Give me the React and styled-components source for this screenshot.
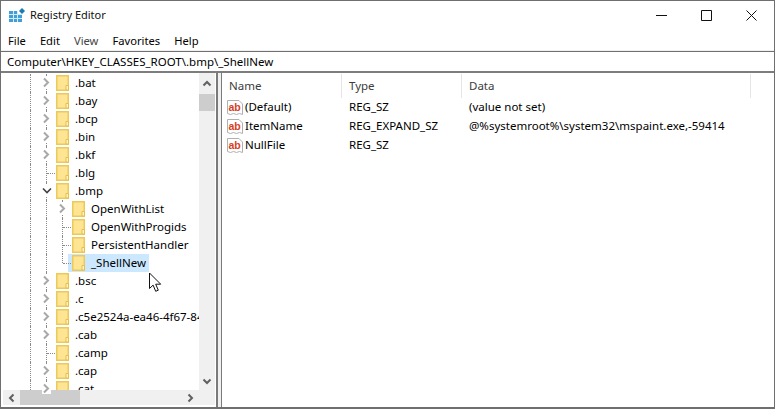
import styled, { createGlobalStyle } from "styled-components";

const Global = createGlobalStyle`
  html, body {
    margin: 0;
    padding: 0;
    background: #fff;
  }
  * {
    box-sizing: border-box;
  }
`;

const Window = styled.div`
  position: relative;
  width: 775px;
  height: 409px;
  display: flex;
  flex-direction: column;
  overflow: hidden;
  background: #fff;
  border: 1px solid #6f6f6f;
  border-bottom: 0;
  color: #000;
  font-family: "Noto Sans", "Open Sans", sans-serif;
  font-size: 11.5px;
`;

const TitleBar = styled.div`
  height: 29px;
  flex: none;
  display: flex;
  align-items: center;
  padding-left: 8px;
`;

const AppName = styled.span`
  margin: 0 0 2px 5px;
  font-size: 11px;
  color: #111;
`;

const Controls = styled.div`
  margin-left: auto;
  display: flex;
`;

const ControlButton = styled.div`
  width: 45px;
  height: 29px;
  display: flex;
  align-items: center;
  justify-content: center;
`;

const MenuBar = styled.div`
  height: 21px;
  flex: none;
  display: flex;
  align-items: center;
  padding-left: 7px;
  gap: 14px;
  border-bottom: 1px solid #f0f0f0;
`;

const MenuItem = styled.span`
  font-size: 11.2px;
  color: ${(p) => (p.$faded ? "#444" : "#000")};
`;

const AddressBar = styled.div`
  height: 22px;
  flex: none;
  display: flex;
  align-items: center;
  padding-left: 6px;
  border-top: 1px solid #6f6f6f;
  border-bottom: 2px solid #7d7d7d;
`;

const Panes = styled.div`
  flex: 1;
  min-height: 0;
  display: flex;
  border-bottom: 2px solid #6f6f6f;
`;

const TreePane = styled.div`
  position: relative;
  width: 215px;
  flex: none;
  overflow: hidden;
`;

const TreeRows = styled.div`
  padding-top: 1px;
`;

const Row = styled.div`
  position: relative;
  height: 18px;
  display: flex;
  align-items: center;
  padding-left: ${(p) => (p.$depth ? 67 : 51)}px;
  white-space: nowrap;

  &::before {
    content: "";
    position: absolute;
    left: 29px;
    top: 0;
    bottom: 0;
    border-left: 1px dotted #8a8a8a;
  }

  &::after {
    content: "";
    position: absolute;
    left: 45px;
    top: 0;
    bottom: 0;
    border-left: 1px dotted #8a8a8a;
  }
`;

const BranchLine = styled.span`
  position: absolute;
  left: 61px;
  top: 0;
  height: ${(p) => (p.$last ? 9 : 18)}px;
  border-left: 1px dotted #8a8a8a;
`;

const Tick = styled.span`
  position: absolute;
  left: ${(p) => (p.$depth ? 62 : 46)}px;
  top: 9px;
  width: 8px;
  border-top: 1px dotted #8a8a8a;
`;

const Arrow = styled.svg`
  position: absolute;
  z-index: 1;
  left: ${(p) => (p.$depth ? 57 : 41)}px;
  top: 3px;
  background: #fff;
`;

const NodeLabel = styled.span`
  display: inline-flex;
  align-items: center;
  height: 18px;
  padding: 0 ${(p) => (p.$selected ? 3 : 0)}px 0 4px;
  gap: 6px;
  background: ${(p) => (p.$selected ? "#cce8ff" : "transparent")};
`;

const NodeText = styled.span`
  margin-bottom: 2px;
`;

const VScroll = styled.div`
  position: absolute;
  top: 0;
  right: 1px;
  bottom: 2px;
  width: 16px;
  background: #f0f0f0;
  display: flex;
  flex-direction: column;
`;

const ScrollStep = styled.div`
  height: ${(p) => (p.$end ? 17 : 21)}px;
  flex: none;
  display: flex;
  align-items: center;
  justify-content: center;
  margin-top: ${(p) => (p.$end ? "auto" : 0)};
  margin-bottom: ${(p) => (p.$end ? 15 : 0)}px;
`;

const VThumb = styled.div`
  height: 17px;
  background: #cdcdcd;
`;

const HScroll = styled.div`
  position: absolute;
  left: 2px;
  right: 17px;
  bottom: 2px;
  height: 15px;
  background: #f0f0f0;
  display: flex;
  align-items: center;
`;

const HStep = styled.div`
  width: 17px;
  height: 15px;
  flex: none;
  display: flex;
  align-items: center;
  justify-content: center;
  margin-left: ${(p) => (p.$end ? "auto" : 0)};
`;

const HThumb = styled.div`
  width: 60px;
  height: 15px;
  background: #cdcdcd;
`;

const Splitter = styled.div`
  width: 6px;
  flex: none;
  background: #f0f0f0;
  border-left: 2px solid #7a7a7a;
  border-right: 1px solid #7a7a7a;
`;

const ListPane = styled.div`
  flex: 1;
  min-width: 0;
  padding-top: 1px;
`;

const ListHeader = styled.div`
  height: 24px;
  display: grid;
  grid-template-columns: 120px 120px 289px;
  color: #3c3c3c;
`;

const HeaderCell = styled.div`
  display: flex;
  align-items: center;
  padding: 0 0 2px 7px;
  border-right: 1px solid #e5e5e5;
`;

const ListRow = styled.div`
  height: 19px;
  display: grid;
  grid-template-columns: 120px 120px 1fr;
  align-items: center;
`;

const NameCell = styled.div`
  display: flex;
  align-items: center;
  gap: 2px;
  padding-left: 5px;
`;

const NameText = styled.span`
  margin-bottom: 2px;
`;

const TextCell = styled.div`
  padding: 0 0 2px 7px;
  white-space: nowrap;
`;

const Pointer = styled.svg`
  position: absolute;
  z-index: 2;
  left: 147px;
  top: 271px;
`;

const AppIcon = () => (
  <svg width="16" height="16" viewBox="0 0 16 16">
    <path d="M0 3h9v3h4v8H0z" fill="#3f9fd6" />
    <path d="M4.5 3v11M8.5 3v11M0 6.5h13M0 10.5h13" stroke="#d3ecf8" strokeWidth="1" />
    <path d="M10 3l3-3 3 3-3 3z" fill="#1b7bb4" />
  </svg>
);

const FolderIcon = () => (
  <svg width="13" height="16" viewBox="0 0 13 16">
    <path d="M.75.75h11.5v14.5H.75z" fill="#fee594" stroke="#eec95a" strokeWidth="1.5" />
    <path d="M10 10.5h2.5V15H10z" fill="#fff3c4" stroke="#e8bf46" />
  </svg>
);

const ValueIcon = () => (
  <svg width="16" height="16" viewBox="0 0 16 16">
    <path
      d="M.5.5h11.5l3.5 3.5v10.5l-3-1-3 1-3-1-3 1-3-1z"
      fill="#fff"
      stroke="#b0b0b0"
    />
    <text
      x="1.5"
      y="11"
      fontFamily="Liberation Sans, sans-serif"
      fontSize="10.5"
      fontWeight="700"
      fill="#d8401f"
    >
      ab
    </text>
  </svg>
);

const rows = [
  { name: ".bat", arrow: true },
  { name: ".bay", arrow: true },
  { name: ".bcp", arrow: true },
  { name: ".bin", arrow: true },
  { name: ".bkf", arrow: true },
  { name: ".blg" },
  { name: ".bmp", open: true },
  { name: "OpenWithList", depth: 1, arrow: true },
  { name: "OpenWithProgids", depth: 1 },
  { name: "PersistentHandler", depth: 1 },
  { name: "_ShellNew", depth: 1, selected: true, last: true },
  { name: ".bsc", arrow: true },
  { name: ".c", arrow: true },
  { name: ".c5e2524a-ea46-4f67-84", arrow: true },
  { name: ".cab", arrow: true },
  { name: ".camp" },
  { name: ".cap", arrow: true },
  { name: ".cat", arrow: true },
];

const values = [
  { name: "(Default)", type: "REG_SZ", data: "(value not set)" },
  {
    name: "ItemName",
    type: "REG_EXPAND_SZ",
    data: "@%systemroot%\\system32\\mspaint.exe,-59414",
  },
  { name: "NullFile", type: "REG_SZ", data: "" },
];

export default function App() {
  return (
    <>
      <Global />
      <Window>
        <TitleBar>
          <AppIcon />
          <AppName>Registry Editor</AppName>
          <Controls>
            <ControlButton>
              <svg width="11" height="11">
                <path d="M0 5.5h11" stroke="#111" />
              </svg>
            </ControlButton>
            <ControlButton>
              <svg width="11" height="11">
                <path d="M.5.5h10v10H.5z" stroke="#111" fill="none" />
              </svg>
            </ControlButton>
            <ControlButton>
              <svg width="11" height="11">
                <path d="M.5.5l10 10M10.5.5l-10 10" stroke="#111" />
              </svg>
            </ControlButton>
          </Controls>
        </TitleBar>
        <MenuBar>
          <MenuItem>File</MenuItem>
          <MenuItem>Edit</MenuItem>
          <MenuItem $faded>View</MenuItem>
          <MenuItem>Favorites</MenuItem>
          <MenuItem>Help</MenuItem>
        </MenuBar>
        <AddressBar>Computer\HKEY_CLASSES_ROOT\.bmp\_ShellNew</AddressBar>
        <Panes>
          <TreePane>
            <TreeRows>
              {rows.map((row) => (
                <Row key={row.name} $depth={row.depth}>
                  {row.depth && <BranchLine $last={row.last} />}
                  {!row.arrow && !row.open && <Tick $depth={row.depth} />}
                  {row.arrow && (
                    <Arrow $depth={row.depth} width="9" height="11" viewBox="0 0 9 11">
                      <path d="M2 1.5l4 4-4 4" fill="none" stroke="#a8a8a8" strokeWidth="2" />
                    </Arrow>
                  )}
                  {row.open && (
                    <Arrow $depth={row.depth} width="10" height="11" viewBox="0 0 10 11">
                      <path d="M1 3.5l4 4 4-4" fill="none" stroke="#404040" strokeWidth="1.6" />
                    </Arrow>
                  )}
                  <NodeLabel $selected={row.selected}>
                    <FolderIcon />
                    <NodeText>{row.name}</NodeText>
                  </NodeLabel>
                </Row>
              ))}
            </TreeRows>
            <HScroll>
              <HStep>
                <svg width="7" height="10">
                  <path d="M5.5 1.5L2 5l3.5 3.5" fill="none" stroke="#606060" strokeWidth="2" />
                </svg>
              </HStep>
              <HThumb />
              <HStep $end>
                <svg width="7" height="10">
                  <path d="M1.5 1.5L5 5 1.5 8.5" fill="none" stroke="#606060" strokeWidth="2" />
                </svg>
              </HStep>
            </HScroll>
            <VScroll>
              <ScrollStep>
                <svg width="10" height="7">
                  <path d="M1.5 5.5L5 2l3.5 3.5" fill="none" stroke="#606060" strokeWidth="2" />
                </svg>
              </ScrollStep>
              <VThumb />
              <ScrollStep $end>
                <svg width="10" height="7">
                  <path d="M1.5 1.5L5 5l3.5-3.5" fill="none" stroke="#606060" strokeWidth="2" />
                </svg>
              </ScrollStep>
            </VScroll>
          </TreePane>
          <Splitter />
          <ListPane>
            <ListHeader>
              <HeaderCell>Name</HeaderCell>
              <HeaderCell>Type</HeaderCell>
              <HeaderCell>Data</HeaderCell>
            </ListHeader>
            {values.map((v) => (
              <ListRow key={v.name}>
                <NameCell>
                  <ValueIcon />
                  <NameText>{v.name}</NameText>
                </NameCell>
                <TextCell>{v.type}</TextCell>
                <TextCell>{v.data}</TextCell>
              </ListRow>
            ))}
          </ListPane>
        </Panes>
        <Pointer width="15" height="21" viewBox="0 0 15 21">
          <path
            d="M1.5 1v15.5l3.6-3.4 2.6 6.2 2.6-1.1-2.6-6h5z"
            fill="#fff"
            stroke="#111"
            strokeWidth="1"
          />
        </Pointer>
      </Window>
    </>
  );
}
